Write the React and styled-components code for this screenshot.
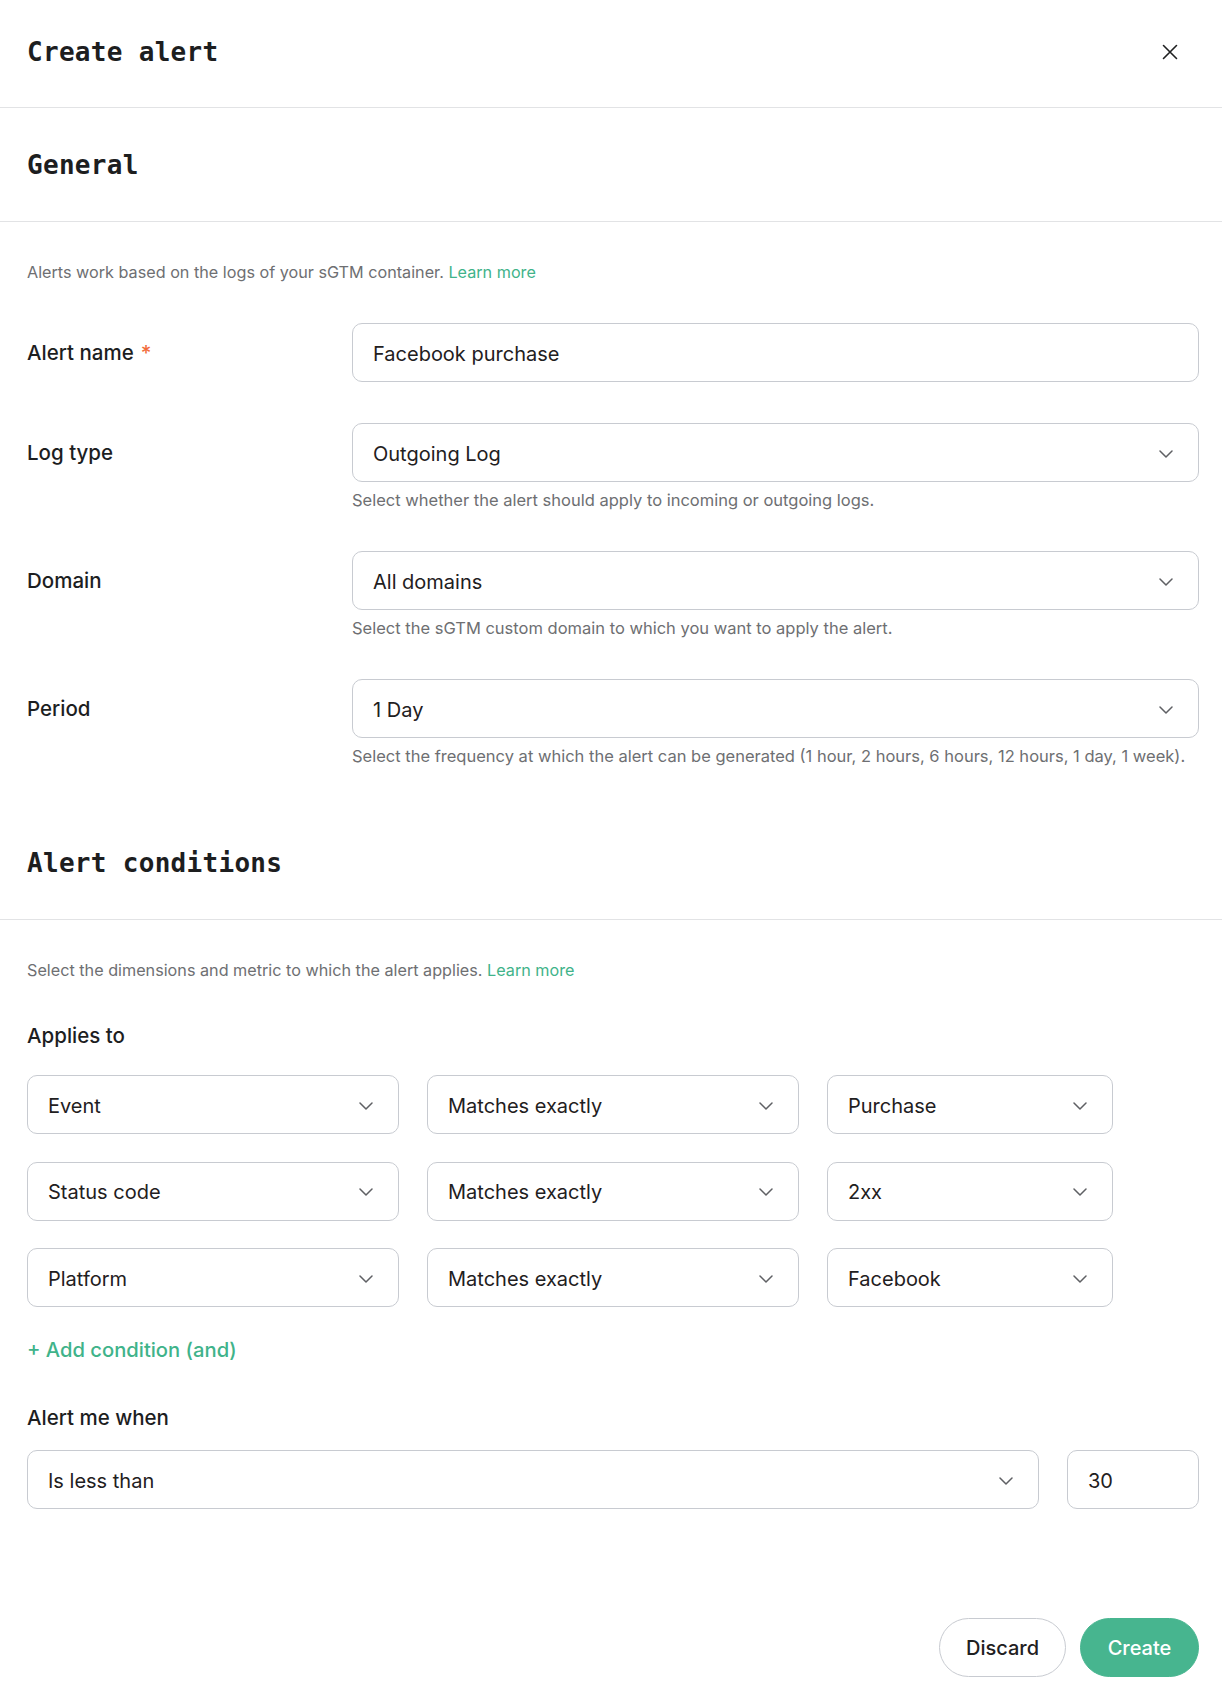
import React from "react";
import styled, { createGlobalStyle } from "styled-components";

const GlobalStyle = createGlobalStyle`
  html, body {
    margin: 0;
    padding: 0;
    background: #ffffff;
  }
  body {
    font-family: Inter, "Open Sans", "Liberation Sans", sans-serif;
    color: #1f2021;
    -webkit-font-smoothing: antialiased;
  }
  * { box-sizing: border-box; }
`;

const Page = styled.div`
  width: 100%;
  min-height: 1696px;
  display: flex;
  flex-direction: column;
  background: #fff;
`;

const Header = styled.header`
  height: 108px;
  display: flex;
  align-items: center;
  justify-content: space-between;
  padding: 0 36px 3px 27px;
  border-bottom: 1px solid #e2e3e5;
`;

const Title = styled.h1`
  margin: 0;
  font-family: "DejaVu Sans Mono", "Liberation Mono", monospace;
  font-weight: 700;
  font-size: 26px;
  letter-spacing: 0.3px;
  color: #1d1e1f;
`;

const CloseButton = styled.button`
  width: 32px;
  height: 32px;
  border: none;
  background: transparent;
  padding: 0;
  display: flex;
  align-items: center;
  justify-content: center;
  cursor: pointer;
  color: #1f2021;
`;

const SectionHeader = styled.div`
  height: 114px;
  display: flex;
  align-items: center;
  padding: 0 27px;
  border-bottom: 1px solid #e2e3e5;
`;

const SectionTitle = styled.h2`
  margin: 0;
  font-family: "DejaVu Sans Mono", "Liberation Mono", monospace;
  font-weight: 700;
  font-size: 26px;
  letter-spacing: 0.3px;
  color: #1d1e1f;
`;

const SectionBody = styled.section`
  padding: 38px 23px ${(p) => p.$bottom || 0}px 27px;
  display: flex;
  flex-direction: column;
`;

const Description = styled.p`
  margin: 0;
  font-size: 16.2px;
  line-height: 23px;
  padding-top: 1px;
  color: #6e6f72;
`;

const Link = styled.a`
  color: #3fb38a;
  text-decoration: none;
  cursor: pointer;
`;

const FieldList = styled.div`
  margin-top: 39px;
  display: flex;
  flex-direction: column;
  gap: 41px;
`;

const FieldRow = styled.div`
  display: grid;
  grid-template-columns: 325px 1fr;
  align-items: start;
`;

const Label = styled.div`
  font-size: 20.5px;
  font-weight: 500;
  line-height: ${(p) => (p.$inline ? 24 : 23)}px;
  color: #1d1e1f;
  padding-top: ${(p) => (p.$inline ? 18 : 1)}px;
  margin-top: ${(p) => p.$mt || 0}px;
`;

const Required = styled.span`
  color: #f26b3a;
  margin-left: 7px;
`;

const Control = styled.div`
  display: flex;
  flex-direction: column;
`;

const Box = styled.div`
  height: 59px;
  display: flex;
  align-items: center;
  justify-content: space-between;
  padding: 2px 25px 0 20px;
  border: 1px solid #c8cbd1;
  border-radius: 10px;
  background: #fff;
  font-size: 20px;
  color: #1f2021;
  cursor: ${(p) => (p.$select ? "pointer" : "text")};
`;

const Helper = styled.div`
  margin-top: 8px;
  font-size: 16.5px;
  line-height: 19px;
  padding-top: 1px;
  color: #6e6f72;
`;

const ConditionGrid = styled.div`
  margin-top: 28px;
  display: grid;
  grid-template-columns: 372px 372px 286px;
  column-gap: 28px;
  row-gap: 27.5px;
`;

const AddCondition = styled.button`
  align-self: flex-start;
  margin-top: 30px;
  padding: 1px 0 0;
  border: none;
  background: transparent;
  font-family: inherit;
  font-size: 20.2px;
  font-weight: 500;
  line-height: 23px;
  color: #3fb38a;
  cursor: pointer;
`;

const ThresholdRow = styled.div`
  margin-top: 21px;
  display: grid;
  grid-template-columns: 1fr 132px;
  column-gap: 28px;
`;

const Footer = styled.footer`
  margin-top: 109px;
  padding: 0 23px 19px 27px;
  display: flex;
  justify-content: flex-end;
  gap: 14px;
`;

const Button = styled.button`
  height: 59px;
  width: ${(p) => p.$w}px;
  border-radius: 30px;
  font-family: inherit;
  font-size: 20px;
  font-weight: 500;
  padding-top: 2px;
  cursor: pointer;
  border: 1px solid ${(p) => (p.$primary ? "#47b58f" : "#c8cbd1")};
  background: ${(p) => (p.$primary ? "#47b58f" : "#fff")};
  color: ${(p) => (p.$primary ? "#fff" : "#1f2021")};
`;

const Chevron = () => (
  <svg width="14" height="8" viewBox="0 0 14 8" fill="none">
    <path d="M1 1l6 6 6-6" stroke="#5f6064" strokeWidth="1.5" strokeLinecap="round" strokeLinejoin="round" />
  </svg>
);

const CloseIcon = () => (
  <svg width="16" height="16" viewBox="0 0 16 16" fill="none">
    <path d="M1.5 1.5l13 13M14.5 1.5l-13 13" stroke="#1f2021" strokeWidth="1.6" strokeLinecap="round" />
  </svg>
);

const Select = ({ value }) => (
  <Box $select>
    <span>{value}</span>
    <Chevron />
  </Box>
);

const conditions = [
  ["Event", "Matches exactly", "Purchase"],
  ["Status code", "Matches exactly", "2xx"],
  ["Platform", "Matches exactly", "Facebook"],
];

export default function App() {
  return (
    <>
      <GlobalStyle />
      <Page>
        <Header>
          <Title>Create alert</Title>
          <CloseButton aria-label="Close">
            <CloseIcon />
          </CloseButton>
        </Header>

        <SectionHeader>
          <SectionTitle>General</SectionTitle>
        </SectionHeader>
        <SectionBody $bottom={40}>
          <Description>
            Alerts work based on the logs of your sGTM container. <Link>Learn more</Link>
          </Description>
          <FieldList>
            <FieldRow>
              <Label $inline>
                Alert name<Required>*</Required>
              </Label>
              <Control>
                <Box>Facebook purchase</Box>
              </Control>
            </FieldRow>
            <FieldRow>
              <Label $inline>Log type</Label>
              <Control>
                <Select value="Outgoing Log" />
                <Helper>Select whether the alert should apply to incoming or outgoing logs.</Helper>
              </Control>
            </FieldRow>
            <FieldRow>
              <Label $inline>Domain</Label>
              <Control>
                <Select value="All domains" />
                <Helper>Select the sGTM custom domain to which you want to apply the alert.</Helper>
              </Control>
            </FieldRow>
            <FieldRow>
              <Label $inline>Period</Label>
              <Control>
                <Select value="1 Day" />
                <Helper>
                  Select the frequency at which the alert can be generated (1 hour, 2 hours, 6 hours, 12 hours, 1 day, 1 week).
                </Helper>
              </Control>
            </FieldRow>
          </FieldList>
        </SectionBody>

        <SectionHeader>
          <SectionTitle>Alert conditions</SectionTitle>
        </SectionHeader>
        <SectionBody>
          <Description>
            Select the dimensions and metric to which the alert applies. <Link>Learn more</Link>
          </Description>
          <Label $mt={41}>Applies to</Label>
          <ConditionGrid>
            {conditions.map((row) =>
              row.map((v, i) => <Select key={row[0] + i} value={v} />)
            )}
          </ConditionGrid>
          <AddCondition>+ Add condition (and)</AddCondition>
          <Label $mt={44}>Alert me when</Label>
          <ThresholdRow>
            <Select value="Is less than" />
            <Box>30</Box>
          </ThresholdRow>
        </SectionBody>

        <Footer>
          <Button $w={127}>Discard</Button>
          <Button $w={119} $primary>
            Create
          </Button>
        </Footer>
      </Page>
    </>
  );
}
